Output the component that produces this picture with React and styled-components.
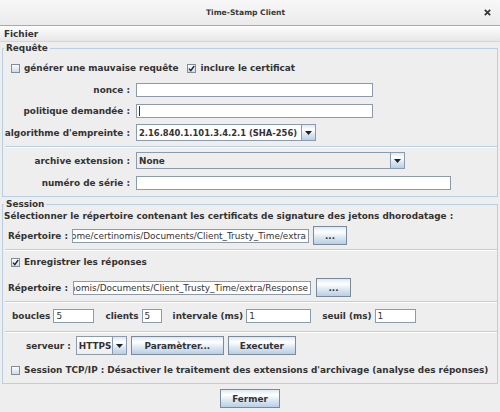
import React from "react";
import styled, { createGlobalStyle } from "styled-components";

const FONT = `"DejaVu Sans", "Liberation Sans", sans-serif`;
const LINE = "#b8cfe5";
const EDGE = "#8c9bab";

const GlobalStyle = createGlobalStyle`
  * { box-sizing: border-box; }
  html, body { margin: 0; padding: 0; background: #eeeeee; }
  body {
    font-family: ${FONT};
    font-size: 8.9px;
    font-weight: bold;
    color: #333333;
  }
`;

const Window = styled.div`
  width: 500px;
  height: 412px;
  display: flex;
  flex-direction: column;
  background: #eeeeee;
  overflow: hidden;
`;

const TitleBar = styled.header`
  flex: none;
  height: 26px;
  display: grid;
  grid-template-columns: 1fr auto 1fr;
  align-items: center;
  padding-right: 9px;
  background: linear-gradient(#f8f8f8, #ebebeb);
  border-bottom: 1px solid #a9a9a9;
`;

const Title = styled.span`
  grid-column: 2;
  font-size: 7.6px;
  color: #3a3a3a;
`;

const CloseButton = styled.span`
  grid-column: 3;
  justify-self: end;
  display: flex;
`;

const MenuBar = styled.nav`
  flex: none;
  height: 16px;
  display: flex;
  align-items: center;
  padding-left: 4px;
  background: linear-gradient(#fdfdfd, #e7e7e7);
  border-bottom: 1px solid #d6d6d6;
`;

const Body = styled.main`
  flex: 1;
  display: flex;
  flex-direction: column;
  padding: 0 2px;
`;

const Group = styled.fieldset`
  margin: ${(p) => p.$top}px 0 0;
  padding: 0 0 ${(p) => p.$bottom}px;
  min-width: 0;
  border: 1px solid ${LINE};
`;

const Legend = styled.legend`
  margin-left: 1px;
  padding: 0 2px;
  line-height: 11px;
`;

const Separator = styled.hr`
  margin: ${(p) => p.$top}px 0 0 2px;
  height: 0;
  border: 0;
  border-top: 1px solid ${LINE};
  border-bottom: 1px solid #ffffff;
`;

const CheckRow = styled.div`
  display: flex;
  align-items: center;
  height: 16px;
  margin-top: ${(p) => p.$top}px;
  padding-left: 8px;
  gap: 9px;
  white-space: nowrap;
`;

const Check = styled.label`
  display: inline-flex;
  align-items: center;
  gap: 4px;
`;

const Box = styled.span`
  width: 9px;
  height: 9px;
  flex: none;
  display: inline-flex;
  border: 1px solid #7f8e9d;
  background: linear-gradient(#fbfdff, #cddbe8);
`;

const FormRow = styled.div`
  display: grid;
  grid-template-columns: 127px auto;
  column-gap: 6px;
  align-items: center;
  justify-items: start;
  height: ${(p) => p.$h}px;
  margin-top: ${(p) => p.$top}px;
`;

const RowLabel = styled.span`
  justify-self: end;
  white-space: nowrap;
`;

const TextField = styled.div`
  width: ${(p) => p.$w}px;
  height: 14px;
  flex: none;
  display: flex;
  align-items: center;
  justify-content: ${(p) => (p.$end ? "flex-end" : "flex-start")};
  padding: 0 2px;
  overflow: hidden;
  white-space: nowrap;
  background: #ffffff;
  border: 1px solid ${EDGE};
  font-weight: normal;
`;

const FieldText = styled.span`
  flex: none;
`;

const Caret = styled.span`
  width: 1px;
  height: 10px;
  background: #333333;
`;

const Combo = styled.div`
  width: ${(p) => p.$w}px;
  height: ${(p) => p.$h}px;
  flex: none;
  display: flex;
  border: 1px solid ${EDGE};
  background: ${(p) => (p.$editable ? "#ffffff" : "#eeeeee")};
`;

const ComboValue = styled.span`
  flex: 1;
  display: flex;
  align-items: center;
  padding-left: 2px;
  white-space: nowrap;
  overflow: hidden;
  font-size: ${(p) => (p.$editable ? "8.4px" : "inherit")};
  background: ${(p) => (p.$light ? "linear-gradient(#ffffff, #eeeeee)" : "transparent")};
`;

const ArrowButton = styled.span`
  width: 14px;
  flex: none;
  display: flex;
  align-items: center;
  justify-content: center;
  border-left: 1px solid ${EDGE};
  background: linear-gradient(#dde8f3 0%, #ffffff 30%, #dde8f3 60%, #b8cfe5 100%);
`;

const Button = styled.button`
  width: ${(p) => p.$w}px;
  height: ${(p) => p.$h || 19}px;
  flex: none;
  padding: 0;
  border: 1px solid #7a8a99;
  border-radius: 0;
  font: inherit;
  color: #333333;
  background: linear-gradient(#dde8f3 0%, #ffffff 30%, #dde8f3 60%, #b8cfe5 100%);
`;

const Intro = styled.div`
  line-height: 12px;
  padding-left: 1px;
  white-space: nowrap;
`;

const DirRow = styled.div`
  display: flex;
  align-items: center;
  gap: ${(p) => p.$gap}px;
  height: 19px;
  margin-top: ${(p) => p.$top}px;
  padding-left: 5px;
`;

const DirLabel = styled.span`
  width: 60px;
  flex: none;
  white-space: nowrap;
`;

const CountRow = styled.div`
  display: flex;
  align-items: center;
  gap: 11px;
  height: 16px;
  margin-top: ${(p) => p.$top}px;
  padding-left: 9px;
`;

const Pair = styled.span`
  display: inline-flex;
  align-items: center;
  gap: 3px;
  white-space: nowrap;
`;

const ActionRow = styled.div`
  display: flex;
  align-items: center;
  gap: 4px;
  height: 19px;
  margin-top: ${(p) => p.$top}px;
  padding-left: 23px;
  white-space: nowrap;
`;

const ServerLabel = styled.span`
  margin-right: 1px;
`;

const Footer = styled.div`
  display: flex;
  justify-content: center;
  margin-top: 5px;
`;

const Arrow = () => (
  <svg width="7" height="4" viewBox="0 0 7 4">
    <polygon points="0,0 7,0 3.5,4" fill="#222" />
  </svg>
);

const CheckBox = ({ checked }) => (
  <Box>
    {checked && (
      <svg width="7" height="7" viewBox="0 0 7 7">
        <path d="M1 3.6 L2.8 5.6 L6.2 1" fill="none" stroke="#222" strokeWidth="1.4" />
      </svg>
    )}
  </Box>
);

const Field = ({ w, value, end, caret }) => (
  <TextField $w={w} $end={end}>
    {caret && <Caret />}
    {value && <FieldText>{value}</FieldText>}
  </TextField>
);

const ComboBox = ({ w, h, value, editable, light }) => (
  <Combo $w={w} $h={h} $editable={editable}>
    <ComboValue $light={light} $editable={editable}>
      {value}
    </ComboValue>
    <ArrowButton>
      <Arrow />
    </ArrowButton>
  </Combo>
);

export default function App() {
  return (
    <>
      <GlobalStyle />
      <Window>
        <TitleBar>
          <Title>Time-Stamp Client</Title>
          <CloseButton>
            <svg width="7" height="7" viewBox="0 0 7 7">
              <path d="M0.8 0.8 L6.2 6.2 M6.2 0.8 L0.8 6.2" stroke="#333" strokeWidth="1.7" />
            </svg>
          </CloseButton>
        </TitleBar>
        <MenuBar>Fichier</MenuBar>

        <Body>
          <Group $top={1} $bottom={5}>
            <Legend>Requête</Legend>
            <CheckRow $top={6}>
              <Check>
                <CheckBox />
                générer une mauvaise requête
              </Check>
              <Check>
                <CheckBox checked />
                inclure le certificat
              </Check>
            </CheckRow>
            <FormRow $h={16} $top={6}>
              <RowLabel>nonce :</RowLabel>
              <Field w={237} />
            </FormRow>
            <FormRow $h={16} $top={5}>
              <RowLabel>politique demandée :</RowLabel>
              <Field w={237} caret />
            </FormRow>
            <FormRow $h={17} $top={5}>
              <RowLabel>algorithme d'empreinte :</RowLabel>
              <ComboBox w={180} h={17} value="2.16.840.1.101.3.4.2.1 (SHA-256)" editable />
            </FormRow>
            <Separator $top={5} />
            <FormRow $h={17} $top={4}>
              <RowLabel>archive extension :</RowLabel>
              <ComboBox w={269} h={17} value="None" />
            </FormRow>
            <FormRow $h={16} $top={6}>
              <RowLabel>numéro de série :</RowLabel>
              <Field w={315} />
            </FormRow>
          </Group>

          <Group $top={2} $bottom={5}>
            <Legend>Session</Legend>
            <Intro>
              Sélectionner le répertoire contenant les certificats de signature des jetons dhorodatage :
            </Intro>
            <DirRow $top={4} $gap={4}>
              <DirLabel>Répertoire :</DirLabel>
              <Field w={237} end value="/home/certinomis/Documents/Client_Trusty_Time/extra" />
              <Button $w={34}>...</Button>
            </DirRow>
            <Separator $top={4} />
            <CheckRow $top={3}>
              <Check>
                <CheckBox checked />
                Enregistrer les réponses
              </Check>
            </CheckRow>
            <DirRow $top={8} $gap={5}>
              <DirLabel>Répertoire :</DirLabel>
              <Field w={238} end value="/home/certinomis/Documents/Client_Trusty_Time/extra/Response" />
              <Button $w={35}>...</Button>
            </DirRow>
            <Separator $top={4} />
            <CountRow $top={5}>
              <Pair>
                boucles
                <Field w={41} value="5" />
              </Pair>
              <Pair>
                clients
                <Field w={20} value="5" />
              </Pair>
              <Pair>
                intervale (ms)
                <Field w={65} value="1" />
              </Pair>
              <Pair>
                seuil (ms)
                <Field w={41} value="1" />
              </Pair>
            </CountRow>
            <Separator $top={7} />
            <ActionRow $top={3}>
              <ServerLabel>serveur :</ServerLabel>
              <ComboBox w={51} h={19} value="HTTPS" light />
              <Button $w={93}>Paramètrer...</Button>
              <Button $w={68}>Executer</Button>
            </ActionRow>
            <CheckRow $top={7}>
              <Check>
                <CheckBox />
                Session TCP/IP : Désactiver le traitement des extensions d'archivage (analyse des réponses)
              </Check>
            </CheckRow>
          </Group>

          <Footer>
            <Button $w={60}>Fermer</Button>
          </Footer>
        </Body>
      </Window>
    </>
  );
}
